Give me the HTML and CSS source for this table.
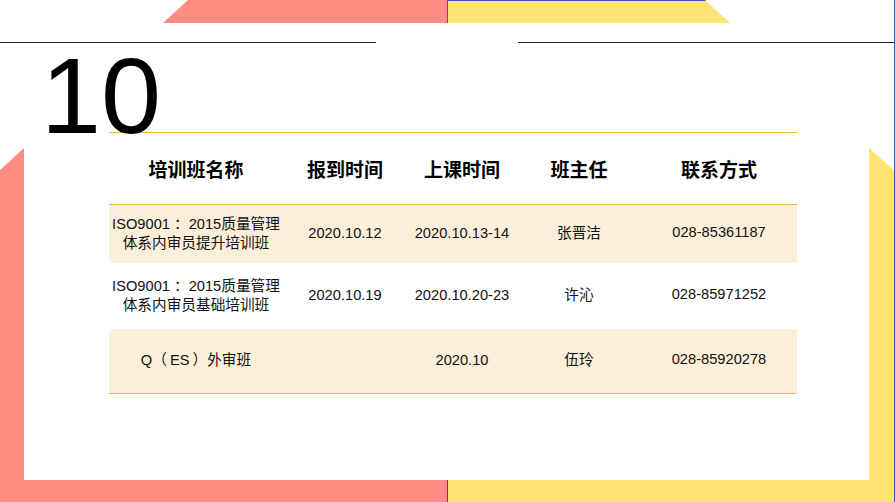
FILE: index.html
```html
<!DOCTYPE html>
<html lang="zh-CN">
<head>
<meta charset="utf-8">
<title>培训班安排</title>
<link rel="stylesheet" href="styles.css">
</head>
<body>
<div class="slide">
  <div class="top-deco">
    <div class="spacer-left"></div>
    <div class="tz-coral"></div>
    <div class="tz-yellow"></div>
  </div>
  <div class="rules">
    <div class="rule rule-left"></div>
    <div class="rule rule-right"></div>
  </div>
  <div class="title">10</div>
  <div class="frame">
    <div class="strip strip-left"></div>
    <div class="content">
      <table class="plan">
        <colgroup>
          <col class="c1"><col class="c2"><col class="c3"><col class="c4"><col class="c5">
        </colgroup>
        <thead>
          <tr>
            <th>培训班名称</th>
            <th>报到时间</th>
            <th>上课时间</th>
            <th>班主任</th>
            <th>联系方式</th>
          </tr>
        </thead>
        <tbody>
          <tr class="r1 shade">
            <td class="name">ISO9001<span class="punct">：</span>2015质量管理<br>体系内审员提升培训班</td>
            <td>2020.10.12</td>
            <td>2020.10.13-14</td>
            <td>张晋洁</td>
            <td class="tel">028-85361187</td>
          </tr>
          <tr class="r2">
            <td class="name">ISO9001<span class="punct">：</span>2015质量管理<br>体系内审员基础培训班</td>
            <td>2020.10.19</td>
            <td>2020.10.20-23</td>
            <td>许沁</td>
            <td class="tel">028-85971252</td>
          </tr>
          <tr class="r3 shade">
            <td class="name">Q<span class="po">（</span>ES<span class="pc">）</span>外审班</td>
            <td></td>
            <td>2020.10</td>
            <td>伍玲</td>
            <td class="tel">028-85920278</td>
          </tr>
        </tbody>
      </table>
    </div>
    <div class="strip strip-right"></div>
    <div class="band"></div>
  </div>
</div>
</body>
</html>
```

FILE: styles.css
```css
* { box-sizing: border-box; }
html, body { margin: 0; padding: 0; background: #fff; }
body { font-family: "Liberation Sans", "Noto Sans CJK SC", sans-serif; color: #111; }

.slide {
  width: 895px;
  height: 502px;
  overflow: hidden;
  display: flex;
  flex-direction: column;
  background: #fff;
  border-right: 1px solid #3f5fae;
}

.top-deco { height: 23px; display: flex; flex: none; }
.spacer-left { width: 163px; }
.tz-coral {
  width: 284px;
  background: #ff8c83;
  clip-path: polygon(25px 0, 100% 0, 100% 100%, 0 100%);
}
.tz-yellow {
  width: 283px;
  background: #ffe475;
  border-top: 1px solid #3a5cab;
  border-left: 1px solid #3a5cab;
  clip-path: polygon(0 0, 258px 0, 100% 100%, 0 100%);
}

.rules { margin-top: 19px; height: 1px; display: flex; flex: none; }
.rule { height: 1px; background: #262626; }
.rule-left { width: 376px; }
.rule-right { margin-left: 142px; flex: 1; }

.title {
  flex: none;
  height: 89px;
  padding-left: 41px;
  font-family: "Liberation Sans", Arial, sans-serif;
  font-size: 108px;
  line-height: 105px;
  color: #000;
  position: relative;
  z-index: 1;
}

.frame {
  flex: 1;
  display: grid;
  grid-template-columns: 24px 1fr 25px;
  grid-template-rows: 1fr 22px;
}
.strip-left {
  grid-column: 1; grid-row: 1;
  background: #ff8c83;
  clip-path: polygon(0 38px, 24px 16px, 24px 100%, 0 100%);
}
.strip-right {
  grid-column: 3; grid-row: 1;
  background: #ffe475;
  clip-path: polygon(0 16px, 100% 38px, 100% 100%, 0 100%);
}
.band {
  grid-column: 1 / 4; grid-row: 2;
  background: linear-gradient(to right, #ff8c83 0, #ff8c83 447px, #2f4f9c 447px, #2f4f9c 448px, #ffe475 448px);
}
.content { grid-column: 2; grid-row: 1; padding-left: 85px; }

.plan {
  width: 688px;
  border-collapse: collapse;
  table-layout: fixed;
  border-top: 1px solid #f2b847;
  border-bottom: 1px solid #f2b847;
}
.c1 { width: 174px; }
.c2 { width: 124px; }
.c3 { width: 110px; }
.c4 { width: 124px; }
.c5 { width: 156px; }

.plan th {
  height: 72px;
  padding: 0;
  font-family: "Noto Sans CJK SC", sans-serif;
  font-weight: 700;
  font-size: 19px;
  color: #000;
  text-align: center;
  vertical-align: middle;
  border-bottom: 1px solid #f2b847;
}
.plan td {
  padding: 0;
  font-size: 14.67px;
  line-height: 19px;
  text-align: center;
  vertical-align: middle;
  color: #111;
}
.punct { margin-left: 4px; }
.po { margin-right: 3px; }
.pc { margin-left: 3px; }
.plan .tel { padding-bottom: 3px; }
.r1 td { height: 58px; }
.r2 td { height: 66px; }
.r3 td { height: 65px; }
.shade td { background: #fcefd9; }
```
